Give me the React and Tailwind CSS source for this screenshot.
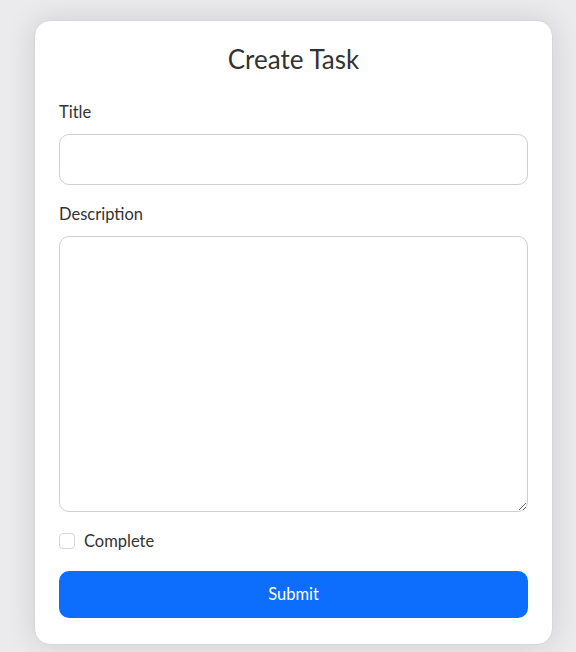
export default function App() {
  return (
    <div className="min-h-[652px] bg-[#ebeaed] pt-[20px] pl-[34px]" style={{ fontFamily: "Lato, 'Noto Sans', sans-serif" }}>
      <div className="w-[519px] rounded-[16px] border border-[#d6d6d8] bg-white px-[24px] pt-[20px] pb-[26px] shadow-[0_0_30px_rgba(0,0,0,0.12)]">
        <h1 className="mb-[23px] text-center text-[26px] leading-[36px] text-[#333]">Create Task</h1>
        <form className="flex flex-col" onSubmit={(e) => e.preventDefault()}>
          <label className="mb-[10px] text-[16.5px] leading-[24px] text-[#333]">Title</label>
          <input type="text" className="h-[51px] rounded-[10px] border border-[#cfcfcf] px-3 outline-none" />
          <label className="mt-[17px] mb-[10px] text-[16.5px] leading-[24px] text-[#333]">Description</label>
          <textarea className="h-[276px] rounded-[10px] border border-[#cfcfcf] px-3 py-2 outline-none" />
          <div className="mt-[17px] flex items-center gap-[9px]">
            <input type="checkbox" className="h-[16px] w-[16px] appearance-none rounded-[4px] border border-[#d4d4d4] bg-white" />
            <span className="text-[16.5px] leading-[24px] text-[#333]">Complete</span>
          </div>
          <button type="submit" className="mt-[18px] h-[47px] rounded-[10px] bg-[#0d6efd] text-[16.5px] text-white">Submit</button>
        </form>
      </div>
    </div>
  );
}
